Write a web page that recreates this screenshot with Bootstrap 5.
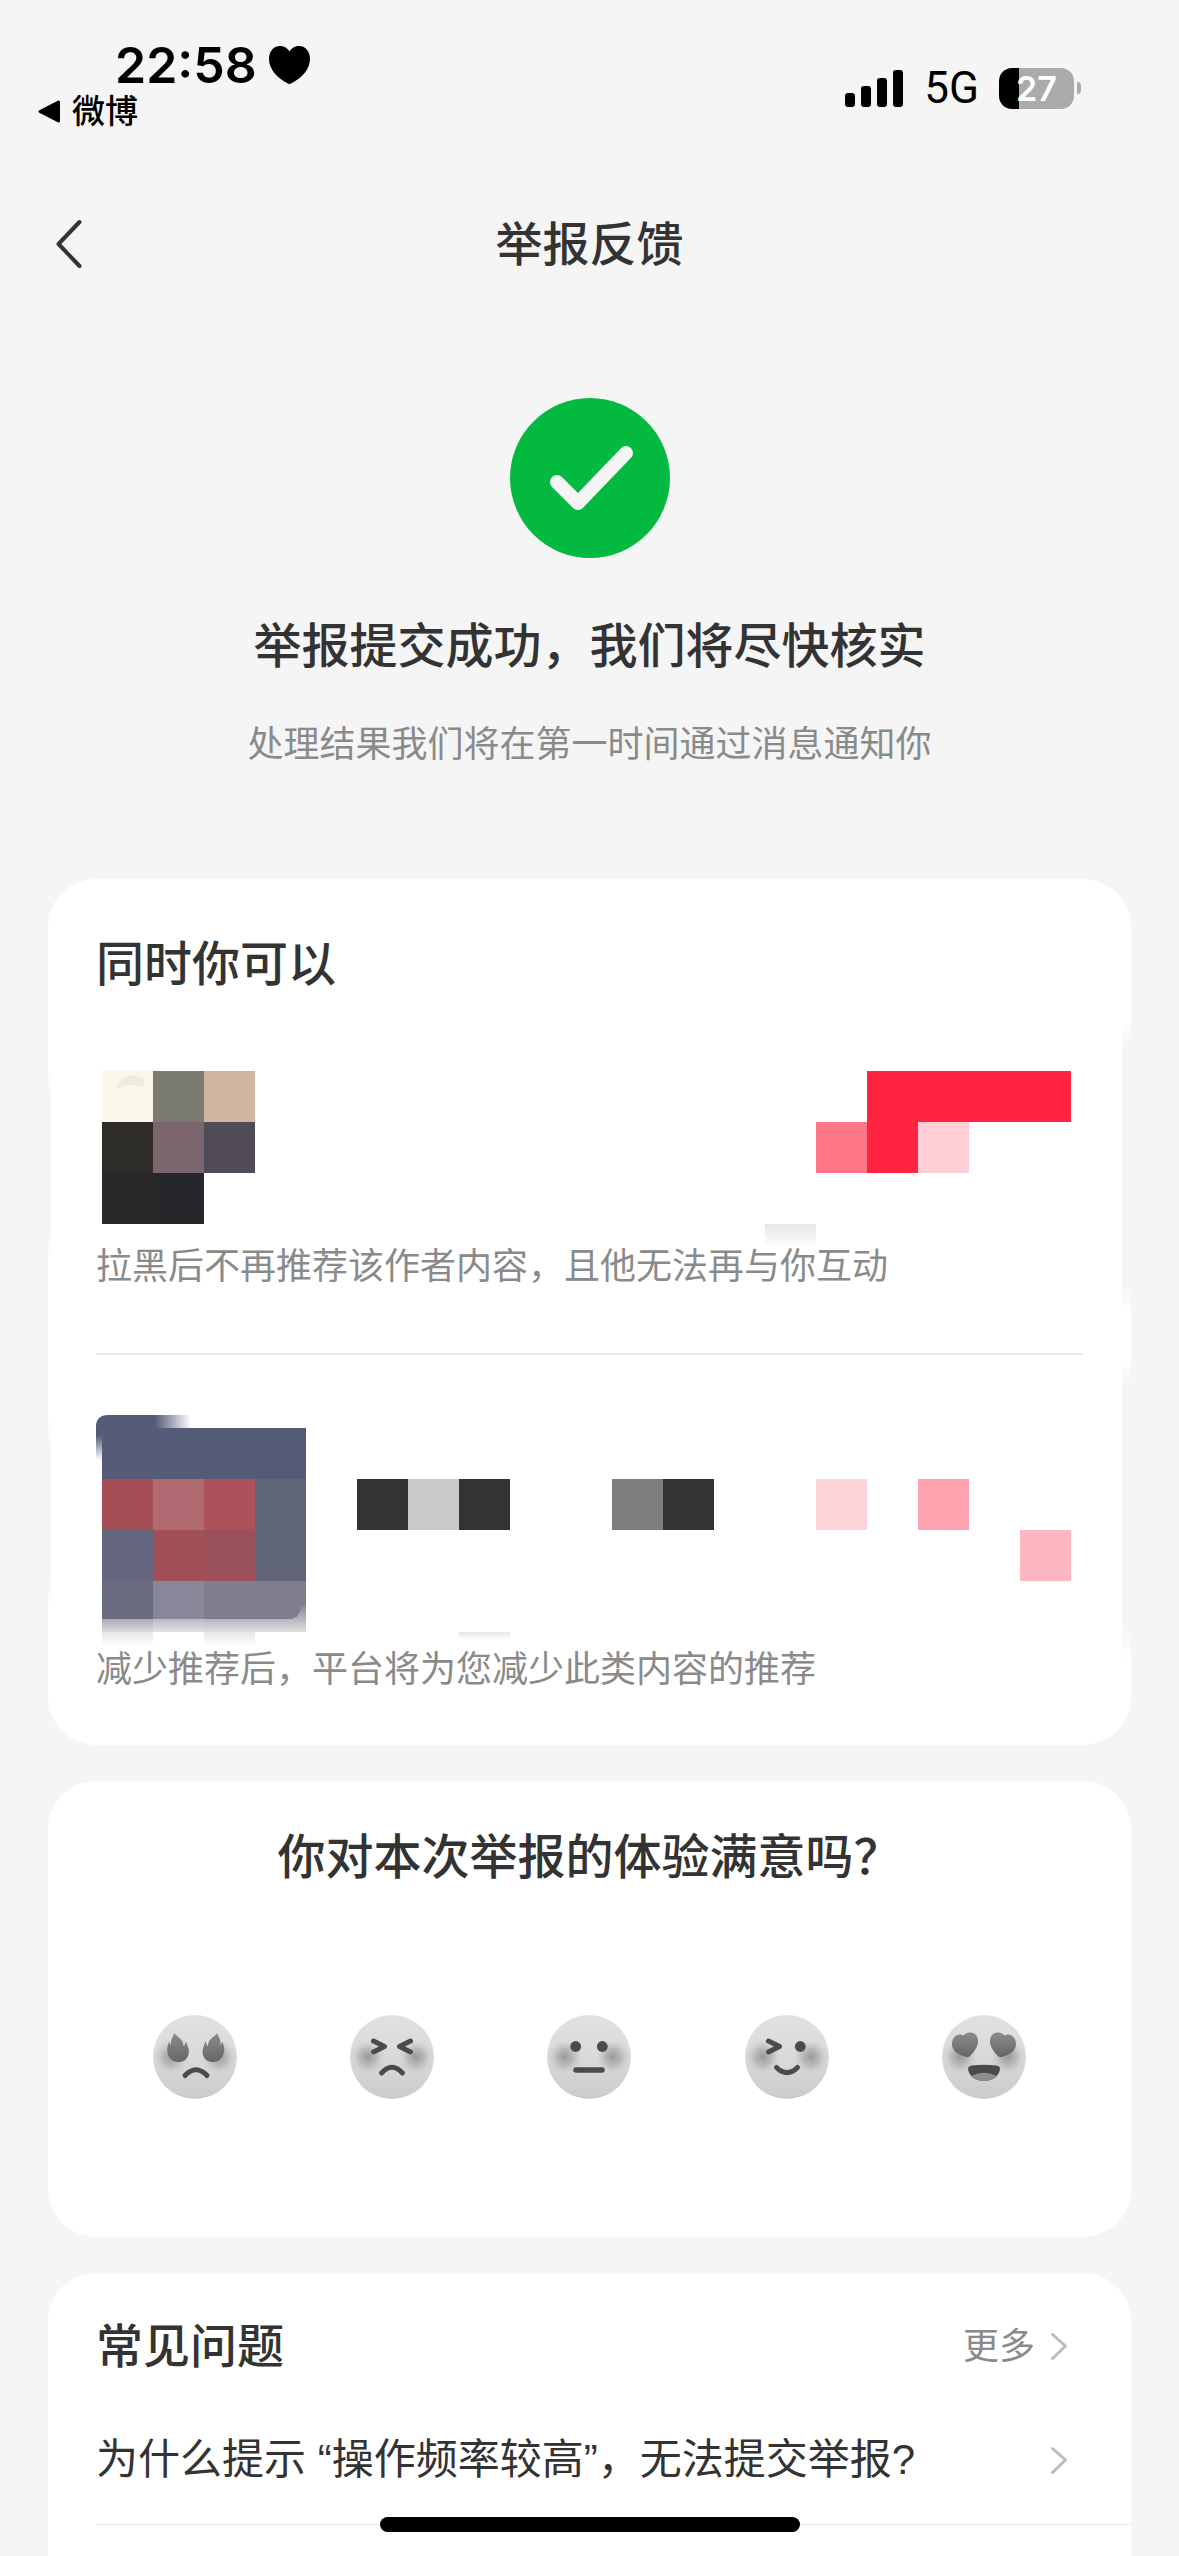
<!DOCTYPE html>
<html lang="zh-CN">
<head>
<meta charset="utf-8">
<meta name="viewport" content="width=device-width, initial-scale=1">
<title>举报反馈</title>
<link rel="stylesheet" href="https://cdn.jsdelivr.net/npm/bootstrap@5.3.0/dist/css/bootstrap.min.css">
<style>
  body { background: #f5f5f5; color: #333; font-family: Inter, "Noto Sans CJK SC", sans-serif; font-size: 36px; line-height: 54px; }
  svg { display: block; overflow: visible; }
  a { color: inherit; text-decoration: none; }

  /* status bar */
  .status { min-height: 184px; padding: 35px 98px 0 38px; color: #000; }
  .clock { padding-left: 77px; gap: 12px; font-size: 50px; font-weight: 600; line-height: 60px; }
  .backapp { gap: 12px; font-size: 33px; font-weight: 500; line-height: 32px; }
  .signals { height: 42px; margin-top: 32px; }
  .network { margin: 0 20px; font-size: 44px; line-height: 42px; font-family: Roboto, sans-serif; }
  .battery { width: 75px; height: 41px; border-radius: 13px; background: linear-gradient(90deg, #000 20px, #ababab 20px); color: #fff; font-size: 34px; font-weight: 600; line-height: 41px; }
  .nub { width: 4px; height: 12px; margin-left: 3px; border-radius: 0 6px 6px 0; background: #ababab; }

  /* title bar: equal side columns keep the title centred */
  .titlebar { height: 120px; padding: 0 53px; }
  .titlebar .side { width: 60px; }
  .heading { font-size: 48px; line-height: 72px; font-weight: 500; }
  .heading-sm { font-size: 47px; line-height: 72px; font-weight: 500; }

  .result { padding: 94px 48px 108px; }
  .result .heading { margin-top: 52px; }
  .result p { margin-top: 35px; }
  .muted { color: #8a8a8a; }

  /* cards */
  .stack { gap: 36px; padding: 0 48px; }
  .panel { background: #fff; border-radius: 48px; padding: 0 48px; }
  .options {
    padding-top: 49px; padding-bottom: 49px;
    background:
      linear-gradient(#fff, #f5f5f5 24px, #f5f5f5 265px, #fff) right 142px / 9px 290px no-repeat,
      linear-gradient(#fff, #f5f5f5 24px, #f5f5f5 265px, #fff) right 481px / 9px 300px no-repeat,
      linear-gradient(#fff, #f5f5f5 30px, #f5f5f5 160px, #fff) left 190px / 3px 190px no-repeat,
      linear-gradient(#fff, #f5f5f5 30px, #f5f5f5 160px, #fff) left 540px / 3px 190px no-repeat,
      #fff;
  }
  .options hr { margin: 60px 0; border: 0; height: 2px; background: #e9e9e9; opacity: 1; }
  .author { margin: 71px 0 15px; }
  .similar { margin-bottom: 10px; }
  .rating { padding-top: 40px; padding-bottom: 138px; }
  .faces { margin-top: 122px; }
  .face { width: 84px; height: 84px; padding: 0; border: 0; background: none; border-radius: 50%; }
  .faq { padding: 37px 0 0 48px; border-radius: 48px 48px 0 0; }
  .faqhead { padding-right: 64px; margin-bottom: 14px; }
  .more { gap: 16px; }
  .question { height: 129px; padding-right: 64px; border-bottom: 1px solid #e9e9e9; font-size: 42px; font-family: "Liberation Sans", "Noto Sans CJK SC", sans-serif; }
  .homebar { position: fixed; left: 50%; bottom: 24px; width: 420px; height: 15px; margin-left: -210px; border-radius: 8px; background: #000; }
</style>
</head>
<body class="d-flex flex-column min-vh-100">

<svg width="0" height="0" class="position-absolute" aria-hidden="true">
  <defs>
    <linearGradient id="skin" x1="0" y1="0" x2="0" y2="1"><stop offset="0" stop-color="#e1e1e1"/><stop offset=".5" stop-color="#dadada"/><stop offset="1" stop-color="#cbcbcb"/></linearGradient>
    <radialGradient id="cheek"><stop offset="0" stop-color="#999"/><stop offset=".45" stop-color="#aaa" stop-opacity=".7"/><stop offset="1" stop-color="#ccc" stop-opacity="0"/></radialGradient>
    <linearGradient id="eye" x1="0" y1="0" x2="0" y2="1"><stop offset="0" stop-color="#8c8c8c"/><stop offset="1" stop-color="#666"/></linearGradient>
    <symbol id="base" viewBox="0 0 84 84"><circle cx="42" cy="42" r="42" fill="url(#skin)"/><circle cx="18" cy="42" r="18" fill="url(#cheek)"/><circle cx="66" cy="42" r="18" fill="url(#cheek)"/></symbol>
    <path id="flame" d="M21.500 18C20 22 17.500 24 18 30C16.500 29 16.500 28 16.500 26.500C12 33 14 47 25.500 47C36 47 37.500 36 34.500 31C34 28.500 33.500 27 32.500 26.500C32.500 29 32 30 30.500 31C30.500 24 24 22 21.500 18Z"/>
    <path id="love" d="M21.500 20.500C24.500 16 35 15.500 36 25C36.500 33 30.500 38 27.500 41.500Q26 42.500 24 42C18 40 10.500 37.500 10 29.500C9.500 21 17.500 17.500 21.500 20.500Z"/>
    <path id="chev" d="M1.500 1.500L14.500 13L1.500 25.500" fill="none" stroke="#bbb" stroke-width="3" stroke-linecap="round" stroke-linejoin="round"/>
    <linearGradient id="fog" x1="0" y1="0" x2="0" y2="1"><stop offset="0" stop-color="#e6e6e6"/><stop offset="1" stop-color="#fff"/></linearGradient>
    <linearGradient id="fadeR"><stop offset=".62" stop-color="#565a78"/><stop offset="1" stop-color="#565a78" stop-opacity="0"/></linearGradient>
    <linearGradient id="fadeD" x1="0" y1="0" x2="0" y2="1"><stop offset=".3" stop-color="#565a78"/><stop offset="1" stop-color="#565a78" stop-opacity="0"/></linearGradient>
    <linearGradient id="melt" x1="0" y1="0" x2="0" y2="1"><stop offset="0" stop-color="#fff" stop-opacity=".1"/><stop offset="1" stop-color="#fff" stop-opacity=".75"/></linearGradient>
  </defs>
</svg>

<div class="status d-flex justify-content-between align-items-start">
  <div>
    <div class="clock d-flex align-items-center"><span>22:58</span>
      <svg width="41" height="38" viewBox="0 0 41 38"><path d="M20.500 5.500C23 1.500 26.500 0 30 0C37 0 41 6 41 13C41 23 33 32 22 37.500Q20.500 38.500 19 37.500C8 32 0 23 0 13C0 6 4 0 11 0C14.500 0 18 1.500 20.500 5.500Z"/></svg>
    </div>
    <a href="#" class="backapp d-flex align-items-center">
      <svg width="22" height="23" viewBox="0 0 22 23"><path d="M2 11.500L20.500 2V21Z" stroke="#000" stroke-width="3" stroke-linejoin="round"/></svg><span>微博</span>
    </a>
  </div>
  <div class="signals d-flex align-items-center">
    <svg width="59" height="37" viewBox="0 0 59 37"><rect y="23" width="10" height="14" rx="3"/><rect x="16" y="16" width="10" height="21" rx="3"/><rect x="32" y="8" width="10" height="29" rx="3"/><rect x="48" width="10" height="37" rx="3"/></svg>
    <span class="network">5G</span>
    <div class="battery text-center">27</div><div class="nub"></div>
  </div>
</div>

<header class="titlebar d-flex align-items-center justify-content-between">
  <div class="side"><button class="btn d-flex p-0 border-0" type="button" aria-label="返回">
    <svg width="30" height="50" viewBox="0 0 30 50"><path d="M26.500 3L5.500 25L26.500 47" fill="none" stroke="#333" stroke-width="4" stroke-linecap="round" stroke-linejoin="round"/></svg>
  </button></div>
  <h1 class="heading-sm m-0">举报反馈</h1>
  <div class="side"></div>
</header>

<section class="result text-center">
  <svg class="mx-auto" width="160" height="160" viewBox="0 0 160 160"><circle cx="80" cy="80" r="80" fill="#04b940"/><path d="M47 84L68 105L116 55" fill="none" stroke="#f5f5f5" stroke-width="14" stroke-linecap="round" stroke-linejoin="round"/></svg>
  <h2 class="heading mb-0">举报提交成功，我们将尽快核实</h2>
  <p class="muted mb-0">处理结果我们将在第一时间通过消息通知你</p>
</section>

<main class="stack d-flex flex-column flex-grow-1">
  <section class="panel options">
    <h2 class="heading m-0">同时你可以</h2>
    <svg class="author w-100" viewBox="0 0 987 153" shape-rendering="crispEdges">
      <g transform="translate(6 0)">
        <path fill="#faf6e8" d="M0 0h51v51H0z"/><path fill="#7c7b70" d="M51 0h51v51H51z"/><path fill="#d2b7a0" d="M102 0h51v51h-51z"/>
        <path fill="#2e2c29" d="M0 51h51v51H0z"/><path fill="#7b666e" d="M51 51h51v51H51z"/><path fill="#504b56" d="M102 51h51v51h-51z"/>
        <path fill="#2a2728" d="M0 102h51v51H0z"/><path fill="#25272a" d="M51 102h51v51H51z"/>
        <path fill="#f1ebdf" d="M13 19Q18 5 31 4L43 8L42 16Q25 11 13 19Z"/>
        <path fill="#ff2442" d="M765 0h204v51H816v51h-51z"/><path fill="#ff7588" d="M714 51h51v51h-51z"/><path fill="#ffced6" d="M816 51h51v51h-51z"/>
        <path fill="url(#fog)" d="M663 153h51v24h-51z"/>
      </g>
    </svg>
    <p class="muted m-0">拉黑后不再推荐该作者内容，且他无法再与你互动</p>
    <hr>
    <svg class="similar w-100" viewBox="0 0 987 217">
      <path fill="url(#fadeR)" d="M0 14V12Q0 0 12 0H95V14Z"/>
      <path fill="url(#fadeD)" d="M0 10H7V45H0Z"/>
      <g transform="translate(6 13)" shape-rendering="crispEdges">
        <path fill="#565b77" d="M0 0h102v51H0z"/><path fill="#545c75" d="M102 0h102v51H102z"/>
        <path fill="#a54e56" d="M0 51h51v51H0z"/><path fill="#b16a71" d="M51 51h51v51H51z"/><path fill="#ac5059" d="M102 51h51v51h-51z"/><path fill="#5f6479" d="M153 51h51v102h-51z"/>
        <path fill="#63667c" d="M0 102h51v51H0z"/><path fill="#a25057" d="M51 102h51v51H51z"/><path fill="#9b515c" d="M102 102h51v51h-51z"/>
        <path fill="#6b6c7f" d="M0 153h51v51H0z"/><path fill="#898699" d="M51 153h51v51H51z"/><path fill="#807e8c" d="M102 153h102v51H102z"/>
        <path fill="url(#melt)" d="M0 191H190Q198 189 199 178H204V204H0Z"/>
        <path fill="url(#fog)" d="M0 204h51v14H0zM102 204h51v14h-51z"/>
        <path fill="url(#fog)" d="M357 204h51v8h-51z"/>
        <path fill="#333" d="M255 51h51v51h-51zM357 51h51v51h-51zM561 51h51v51h-51z"/><path fill="#cacaca" d="M306 51h51v51h-51z"/><path fill="#7e7e7e" d="M510 51h51v51h-51z"/>
        <path fill="#fed4da" d="M714 51h51v51h-51z"/><path fill="#fea3af" d="M816 51h51v51h-51z"/><path fill="#feb7c1" d="M918 102h51v51h-51z"/>
      </g>
    </svg>
    <p class="muted m-0">减少推荐后，平台将为您减少此类内容的推荐</p>
  </section>

  <section class="panel rating">
    <h2 class="heading m-0 text-center">你对本次举报的体验满意吗？</h2>
    <div class="faces row row-cols-5 g-0">
      <div class="col d-flex justify-content-center"><button class="face" type="button" aria-label="非常不满意">
        <svg viewBox="0 0 84 84"><use href="#base"/><g fill="url(#eye)"><use href="#flame"/><use href="#flame" transform="translate(85.500 0) scale(-1 1)"/></g><path d="M32 60.500Q43 49 54 60.500" fill="none" stroke="#4b4b4b" stroke-width="5" stroke-linecap="round"/></svg></button></div>
      <div class="col d-flex justify-content-center"><button class="face" type="button" aria-label="不满意">
        <svg viewBox="0 0 84 84"><use href="#base"/><path d="M23.500 26L34.500 31.500L23.500 37M60.500 26L49.500 31.500L60.500 37M31.500 58Q42 46.500 52.500 58" fill="none" stroke="#4b4b4b" stroke-width="5" stroke-linecap="round" stroke-linejoin="round"/></svg></button></div>
      <div class="col d-flex justify-content-center"><button class="face" type="button" aria-label="一般">
        <svg viewBox="0 0 84 84"><use href="#base"/><circle cx="28.700" cy="31.500" r="5.400" fill="#4b4b4b"/><circle cx="55.300" cy="31.500" r="5.400" fill="#4b4b4b"/><path d="M29 55H55" fill="none" stroke="#4b4b4b" stroke-width="5.500" stroke-linecap="round"/></svg></button></div>
      <div class="col d-flex justify-content-center"><button class="face" type="button" aria-label="满意">
        <svg viewBox="0 0 84 84"><use href="#base"/><circle cx="55.300" cy="31.500" r="5.400" fill="#4b4b4b"/><path d="M23.500 26L34.500 31.500L23.500 37M31.500 52.500Q42 63 52.500 52.500" fill="none" stroke="#4b4b4b" stroke-width="5" stroke-linecap="round" stroke-linejoin="round"/></svg></button></div>
      <div class="col d-flex justify-content-center"><button class="face" type="button" aria-label="非常满意">
        <svg viewBox="0 0 84 84"><use href="#base"/><g fill="url(#eye)"><use href="#love"/><use href="#love" transform="translate(84 0) scale(-1 1)"/></g><path d="M26 54Q26 51 29.500 50.500Q42 49 54.500 50.500Q58 51 58 54C57 61 51 66 42 66S27 61 26 54Z" fill="#4b4b4b"/><path d="M29.500 61Q42 54.500 54.500 61Q50 66 42 66T29.500 61Z" fill="#8e8e8e"/></svg></button></div>
    </div>
  </section>

  <section class="panel faq flex-grow-1">
    <div class="faqhead d-flex justify-content-between align-items-center">
      <h2 class="heading-sm m-0">常见问题</h2>
      <a href="#" class="more muted d-flex align-items-center">更多<svg width="16" height="27"><use href="#chev"/></svg></a>
    </div>
    <a href="#" class="question d-flex justify-content-between align-items-center"><span>为什么提示 “操作频率较高”，无法提交举报?</span><svg width="16" height="27"><use href="#chev"/></svg></a>
  </section>
</main>
<div class="homebar"></div>

<script src="https://cdn.jsdelivr.net/npm/bootstrap@5.3.0/dist/js/bootstrap.bundle.min.js"></script>
</body>
</html>
